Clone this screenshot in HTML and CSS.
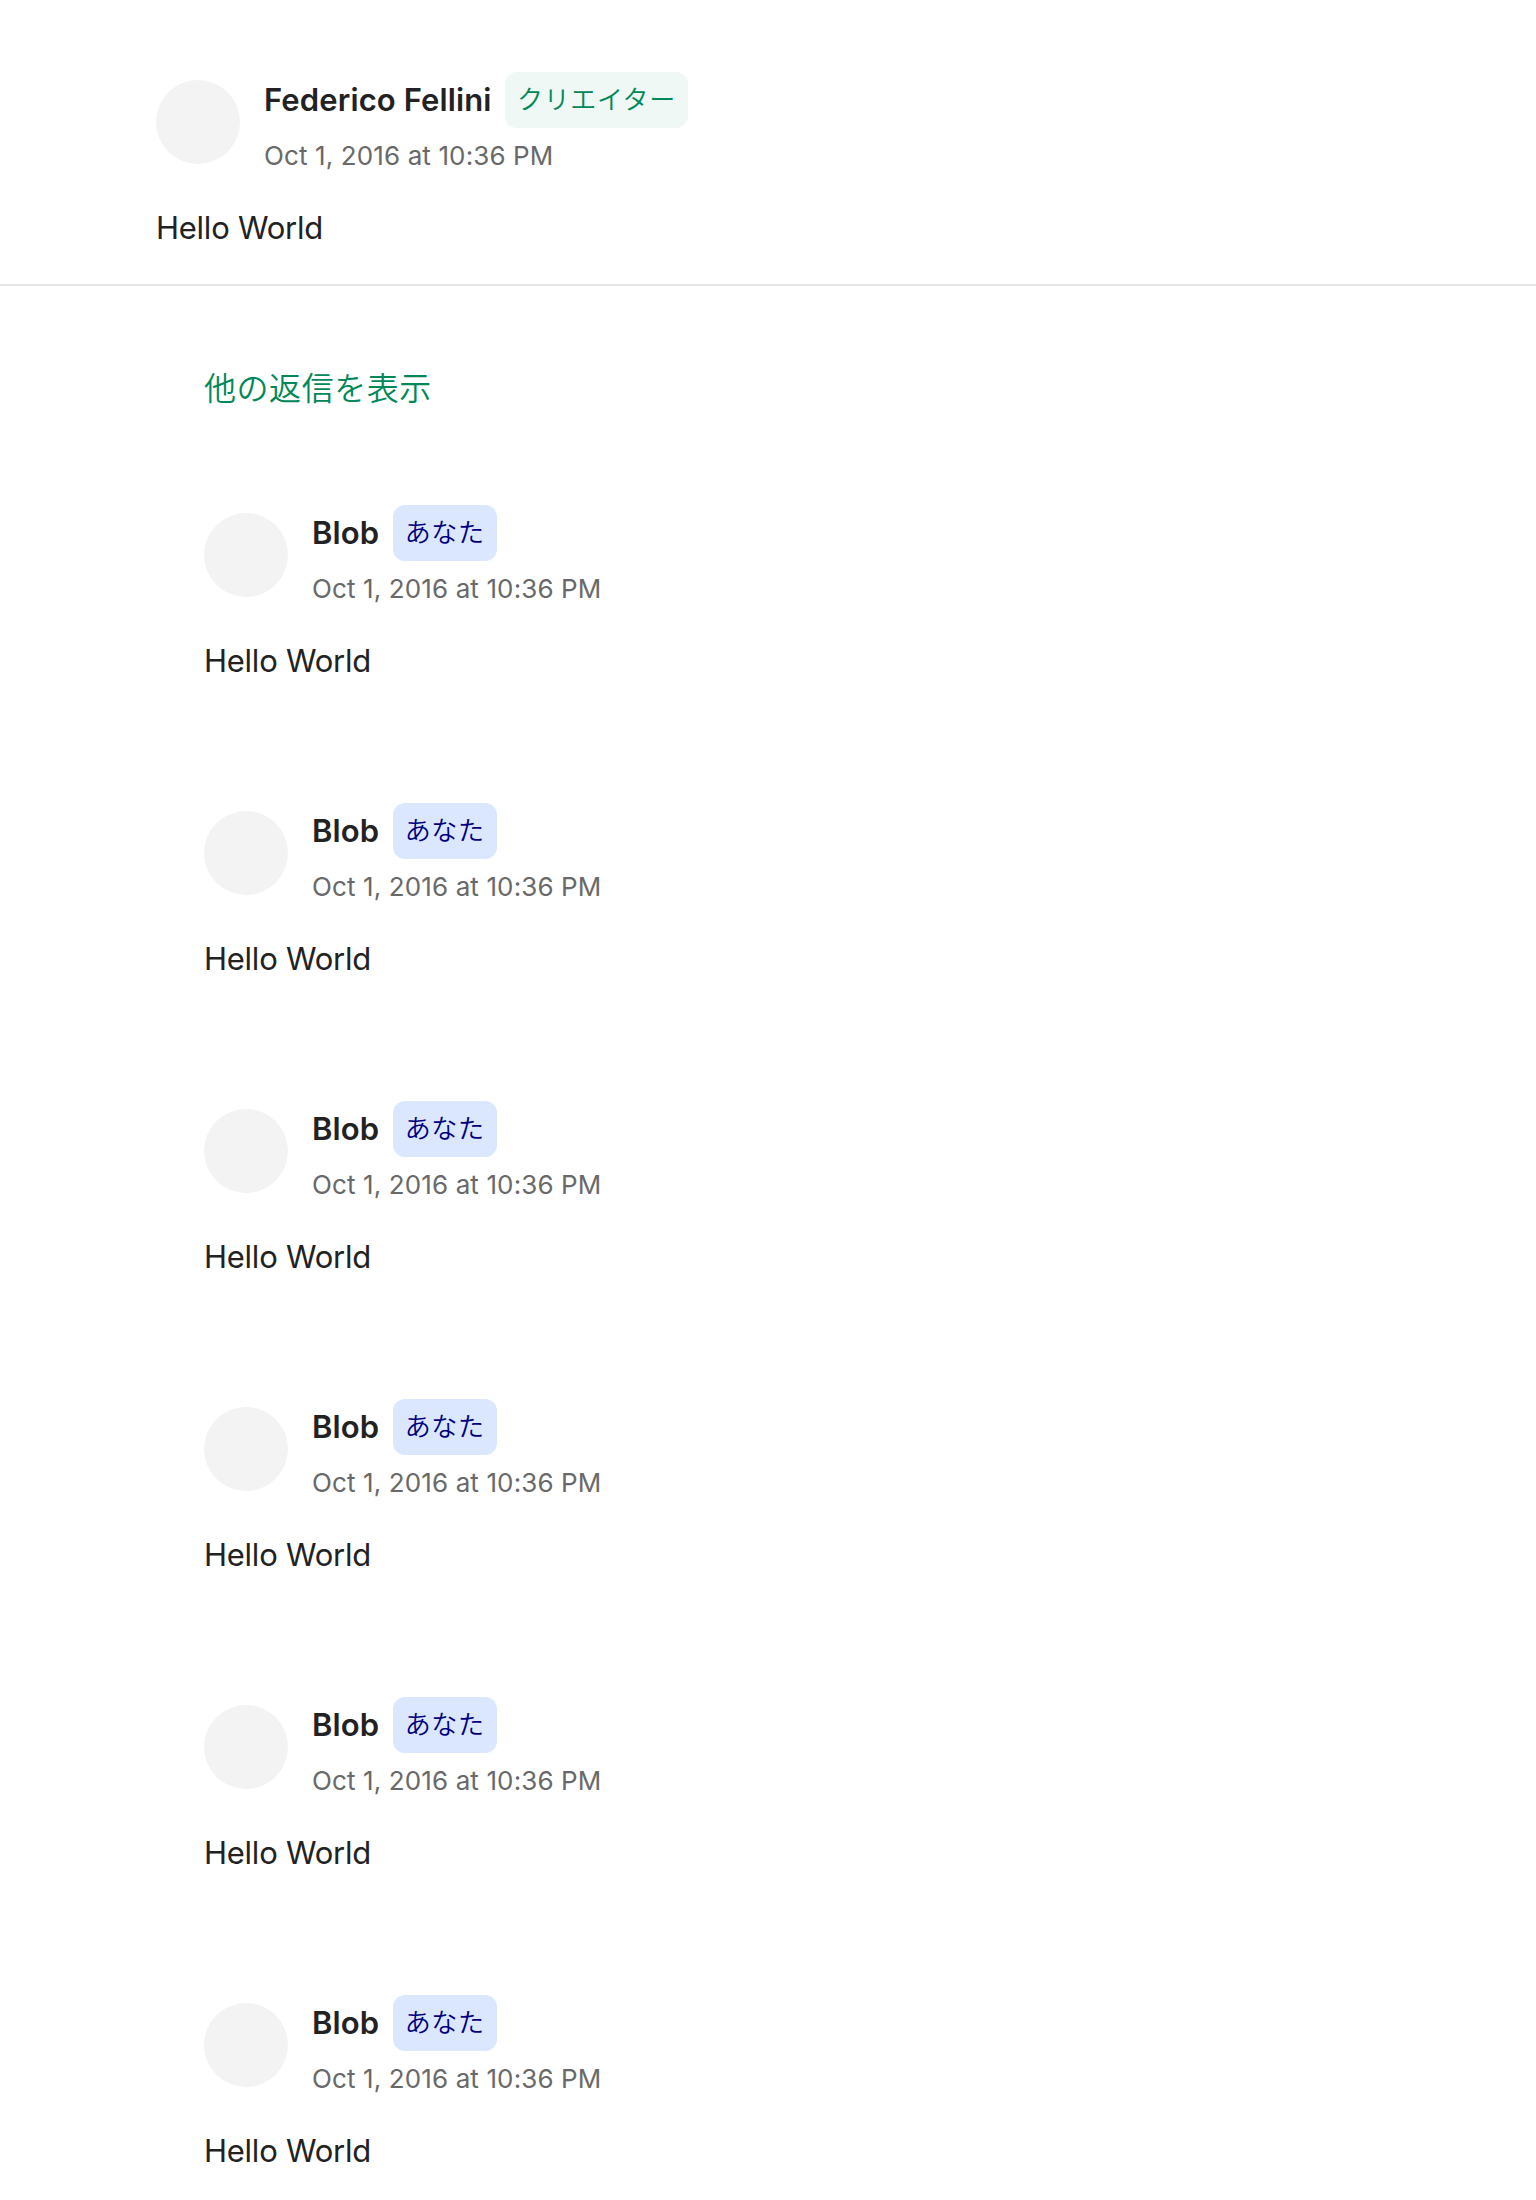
FILE: index.html
```html
<!DOCTYPE html>
<html lang="ja">
<head>
<meta charset="utf-8">
<title>Comments</title>
<link rel="stylesheet" href="styles.css">
</head>
<body>
<article class="comment root">
  <header class="head">
    <div class="avatar"></div>
    <div class="meta">
      <div class="line"><span class="name">Federico Fellini</span><span class="badge creator">クリエイター</span></div>
      <time class="date">Oct 1, 2016 at 10:36 PM</time>
    </div>
  </header>
  <p class="text">Hello World</p>
</article>
<section class="replies">
  <a class="more">他の返信を表示</a>
  <article class="comment reply">
    <header class="head">
      <div class="avatar"></div>
      <div class="meta">
        <div class="line"><span class="name">Blob</span><span class="badge you">あなた</span></div>
        <time class="date">Oct 1, 2016 at 10:36 PM</time>
      </div>
    </header>
    <p class="text">Hello World</p>
  </article>
  <article class="comment reply">
    <header class="head">
      <div class="avatar"></div>
      <div class="meta">
        <div class="line"><span class="name">Blob</span><span class="badge you">あなた</span></div>
        <time class="date">Oct 1, 2016 at 10:36 PM</time>
      </div>
    </header>
    <p class="text">Hello World</p>
  </article>
  <article class="comment reply">
    <header class="head">
      <div class="avatar"></div>
      <div class="meta">
        <div class="line"><span class="name">Blob</span><span class="badge you">あなた</span></div>
        <time class="date">Oct 1, 2016 at 10:36 PM</time>
      </div>
    </header>
    <p class="text">Hello World</p>
  </article>
  <article class="comment reply">
    <header class="head">
      <div class="avatar"></div>
      <div class="meta">
        <div class="line"><span class="name">Blob</span><span class="badge you">あなた</span></div>
        <time class="date">Oct 1, 2016 at 10:36 PM</time>
      </div>
    </header>
    <p class="text">Hello World</p>
  </article>
  <article class="comment reply">
    <header class="head">
      <div class="avatar"></div>
      <div class="meta">
        <div class="line"><span class="name">Blob</span><span class="badge you">あなた</span></div>
        <time class="date">Oct 1, 2016 at 10:36 PM</time>
      </div>
    </header>
    <p class="text">Hello World</p>
  </article>
  <article class="comment reply">
    <header class="head">
      <div class="avatar"></div>
      <div class="meta">
        <div class="line"><span class="name">Blob</span><span class="badge you">あなた</span></div>
        <time class="date">Oct 1, 2016 at 10:36 PM</time>
      </div>
    </header>
    <p class="text">Hello World</p>
  </article>
</section>
</body>
</html>
```

FILE: styles.css
```css
* { box-sizing: border-box; }
body {
  margin: 0;
  height: 2200px;
  overflow: hidden;
  background: #fff;
  color: #222;
  font-family: Inter, "Noto Sans CJK JP", sans-serif;
}
.root { height: 286px; padding: 72px 156px 0; border-bottom: 2px solid #e6e6e6; }
.replies { padding: 72px 204px 0; }
.more { display: block; height: 147px; font-size: 32px; font-weight: 350; line-height: 62px; letter-spacing: 0.55px; color: #028858; }
.reply { height: 298px; }
.head { display: flex; gap: 24px; height: 108px; }
.avatar { width: 84px; height: 84px; margin-top: 8px; border-radius: 50%; background: #f3f3f3; }
.line { display: flex; align-items: center; gap: 13.4px; height: 56px; }
.name { padding-bottom: 2px; font-size: 31px; font-weight: 600; letter-spacing: 0.12px; }
.badge { height: 56px; padding: 0 12px; border-radius: 12px; font-size: 26px; font-weight: 350; line-height: 56px; letter-spacing: 0.67px; }
.creator { background: #eff8f5; color: #028858; }
.you { background: #dbe7ff; color: #00007f; }
.date { display: block; margin-top: 12px; font-size: 26px; line-height: 32px; letter-spacing: 0.12px; color: #696969; }
.text { margin: 28px 0 0; font-size: 31px; line-height: 40px; letter-spacing: -0.25px; }
```
